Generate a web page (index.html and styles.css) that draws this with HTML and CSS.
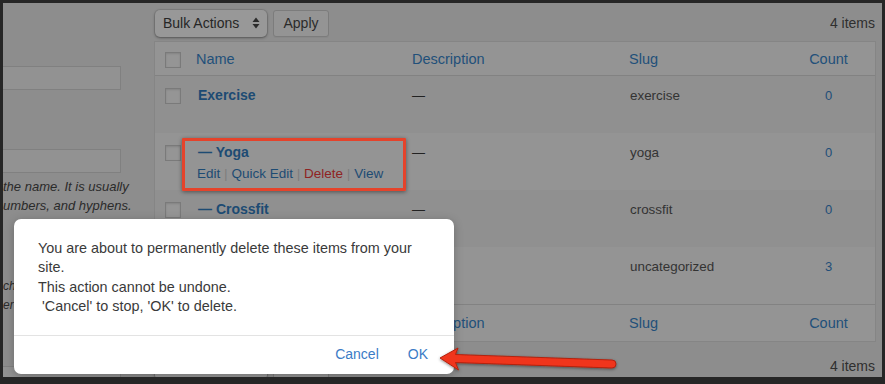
FILE: index.html
```html
<!DOCTYPE html>
<html lang="en">
<head>
<meta charset="utf-8">
<title>Categories</title>
<link rel="stylesheet" href="styles.css">
</head>
<body>
<div class="frame">
  <div class="page">
    <aside class="side">
      <div class="field first"></div>
      <div class="field second"></div>
      <div class="desc-lines">
        <div>the name. It is usually</div>
        <div>umbers, and hyphens.</div>
      </div>
      <div class="desc-lines lower">
        <div>ch</div>
        <div>er</div>
      </div>
      <div class="field third"></div>
    </aside>

    <main class="main">
      <div class="tablenav">
        <div class="bulk">
          <span>Bulk Actions</span>
          <svg class="updown" width="8" height="12" viewBox="0 0 8 12"><path d="M0.5 5 L4 0.5 L7.5 5 Z M0.5 7 L4 11.5 L7.5 7 Z" fill="#2b2b2b"/></svg>
        </div>
        <div class="apply">Apply</div>
        <div class="count-items">4 items</div>
      </div>

      <div class="table">
        <div class="row head">
          <div class="cell check"><span class="box"></span></div>
          <div class="cell">Name</div>
          <div class="cell">Description</div>
          <div class="cell">Slug</div>
          <div class="cell num">Count</div>
        </div>
        <div class="row body odd">
          <div class="cell check"><span class="box"></span></div>
          <div class="cell name"><strong>Exercise</strong></div>
          <div class="cell plain">—</div>
          <div class="cell slug">exercise</div>
          <div class="cell num link">0</div>
        </div>
        <div class="row body">
          <div class="cell check"><span class="box"></span></div>
          <div class="cell name">
            <strong>— Yoga</strong>
            <div class="actions"><span class="a">Edit</span><span class="sep">|</span><span class="a">Quick Edit</span><span class="sep">|</span><span class="del">Delete</span><span class="sep">|</span><span class="a">View</span></div>
            <div class="highlight"></div>
          </div>
          <div class="cell plain">—</div>
          <div class="cell slug">yoga</div>
          <div class="cell num link">0</div>
        </div>
        <div class="row body odd">
          <div class="cell check"><span class="box"></span></div>
          <div class="cell name"><strong>— Crossfit</strong></div>
          <div class="cell plain">—</div>
          <div class="cell slug">crossfit</div>
          <div class="cell num link">0</div>
        </div>
        <div class="row body">
          <div class="cell check"><span class="box"></span></div>
          <div class="cell name"><strong>Uncategorized</strong></div>
          <div class="cell plain">—</div>
          <div class="cell slug">uncategorized</div>
          <div class="cell num link">3</div>
        </div>
        <div class="row head foot">
          <div class="cell check"><span class="box"></span></div>
          <div class="cell">Name</div>
          <div class="cell">Description</div>
          <div class="cell">Slug</div>
          <div class="cell num">Count</div>
        </div>
      </div>

      <div class="tablenav bottom">
        <div class="bulk">
          <span>Bulk Actions</span>
          <svg class="updown" width="8" height="12" viewBox="0 0 8 12"><path d="M0.5 5 L4 0.5 L7.5 5 Z M0.5 7 L4 11.5 L7.5 7 Z" fill="#2b2b2b"/></svg>
        </div>
        <div class="apply">Apply</div>
        <div class="count-items">4 items</div>
      </div>
    </main>
  </div>

  <div class="dialog">
    <div class="message">You are about to permanently delete these items from your site.<br>This action cannot be undone.<br>&nbsp;'Cancel' to stop, 'OK' to delete.</div>
    <div class="buttons">
      <span class="btn">Cancel</span>
      <span class="btn">OK</span>
    </div>
  </div>

  <svg class="arrow" width="200" height="40" viewBox="0 0 200 40">
    <defs>
      <filter id="sh" x="-10%" y="-50%" width="120%" height="200%">
        <feDropShadow dx="0" dy="1" stdDeviation="1.5" flood-color="#000" flood-opacity="0.45"/>
      </filter>
    </defs>
    <path d="M10 18 L28 8 L25.5 14.5 L182 20 A4 4 0 0 1 182 28 L25.5 22.5 L28.5 30 Z" fill="#f0341d" stroke="#b3220f" stroke-width="1" stroke-linejoin="round" filter="url(#sh)"/>
  </svg>
</div>
</body>
</html>
```

FILE: styles.css
```css
* { box-sizing: border-box; }

html, body {
  margin: 0;
  padding: 0;
  background: #262626;
}

body {
  font-family: "Liberation Sans", Arial, sans-serif;
  font-size: 13px;
  color: #2c2c2c;
}

.frame {
  position: relative;
  width: 885px;
  height: 384px;
  border-style: solid;
  border-color: #262626;
  border-width: 3px 3px 7px 3px;
  background: #8d8d8d;
  overflow: hidden;
}

.page {
  display: flex;
  height: 100%;
}

/* left column (clipped form) */
.side {
  width: 151px;
  flex-shrink: 0;
  padding-top: 63px;
}

.field {
  width: 118px;
  height: 24px;
  background: #929292;
  border: 1px solid #808080;
  border-left: none;
}

.field.second { margin-top: 59px; }
.field.third { margin-top: 51px; }

.desc-lines {
  margin-top: 4px;
  font-style: italic;
  font-size: 13px;
  line-height: 19px;
  color: #2a2a2a;
  white-space: nowrap;
}

.desc-lines.lower { margin-top: 62px; font-size: 12px; }

/* main column */
.main {
  width: 722px;
  flex-shrink: 0;
  padding-top: 6px;
}

.tablenav {
  display: flex;
  align-items: center;
  height: 28px;
  font-size: 14px;
}

.tablenav.bottom { margin-top: 10px; }

.bulk {
  display: flex;
  align-items: center;
  justify-content: space-between;
  width: 112px;
  height: 27px;
  margin-left: 1px;
  padding: 0 7px 0 8px;
  background: #989898;
  border-radius: 5px;
  box-shadow: 0 0 0 1px rgba(0,0,0,0.08), 0 1px 3px rgba(0,0,0,0.35);
  color: #262626;
}

.apply {
  margin-left: 6px;
  width: 56px;
  height: 27px;
  line-height: 25px;
  text-align: center;
  border: 1px solid #7c7c7c;
  border-radius: 3px;
  background: #949494;
  color: #2b2b2b;
  box-shadow: 0 1px 0 #888;
}

.count-items {
  margin-left: auto;
  color: #2f2f2f;
  padding-right: 1px;
}

/* table */
.table {
  margin-top: 4px;
  border: 1px solid #858585;
  background: #949494;
}

.row {
  display: grid;
  grid-template-columns: 31px 216px 217px 163px 1fr;
}

.cell {
  padding: 0 10px;
}

.cell.check { padding: 0 0 0 10px; }

.box {
  display: block;
  width: 16px;
  height: 16px;
  border: 1px solid #7a7a7a;
  background: #959595;
  box-shadow: inset 0 1px 2px rgba(0,0,0,0.12);
}

.row.head {
  height: 34px;
  align-items: center;
  font-size: 14.5px;
  color: #22507a;
  border-bottom: 1px solid #828282;
}

.row.head .check { padding-top: 2px; }

.row.foot {
  height: 37px;
  border-bottom: none;
  border-top: 1px solid #828282;
}

.row.head .num { text-align: center; }

.row.body {
  height: 57px;
  line-height: 19px;
}

.row.body.odd { background: #909090; }

.row.body .cell { padding-top: 10px; }
.row.body .cell.check { padding-top: 12px; }

.name { position: relative; }

.name strong {
  font-size: 14px;
  font-weight: bold;
  color: #1d4b73;
  padding-left: 2px;
}

.actions {
  margin-top: 2px;
  padding-left: 1px;
  font-size: 13.5px;
  color: #1d4b73;
  white-space: nowrap;
}

.actions .sep {
  color: #7b7b7b;
  margin: 0 4px;
  font-size: 12px;
}
.actions .del { color: #8f2323; }

.highlight {
  position: absolute;
  left: -4px;
  top: 5px;
  width: 224px;
  height: 53px;
  border: 3px solid #e5432b;
  border-radius: 1px;
  box-shadow: 0 1px 4px rgba(0,0,0,0.45);
}

.plain { color: #222; font-size: 13px; }
.slug { color: #333; font-size: 13.4px; padding-left: 11px; }
.num { text-align: center; }
.link { color: #1f4e78; font-size: 13px; }

/* dialog */
.dialog {
  position: absolute;
  left: 11px;
  top: 216px;
  width: 440px;
  height: 155px;
  background: #ffffff;
  border-radius: 7px;
  box-shadow: 0 2px 10px rgba(0,0,0,0.25);
}

.message {
  padding: 20px 24px 18px 24px;
  font-size: 14.4px;
  line-height: 19.4px;
  color: #3a3a3a;
  height: 117px;
  border-bottom: 1px solid #e3e3e3;
}

.buttons {
  display: flex;
  justify-content: flex-end;
  align-items: center;
  gap: 29px;
  height: 37px;
  padding: 0 26px 2px 0;
  font-size: 14px;
  color: #3b7cc6;
}

.arrow {
  position: absolute;
  left: 427px;
  top: 337px;
}
```
